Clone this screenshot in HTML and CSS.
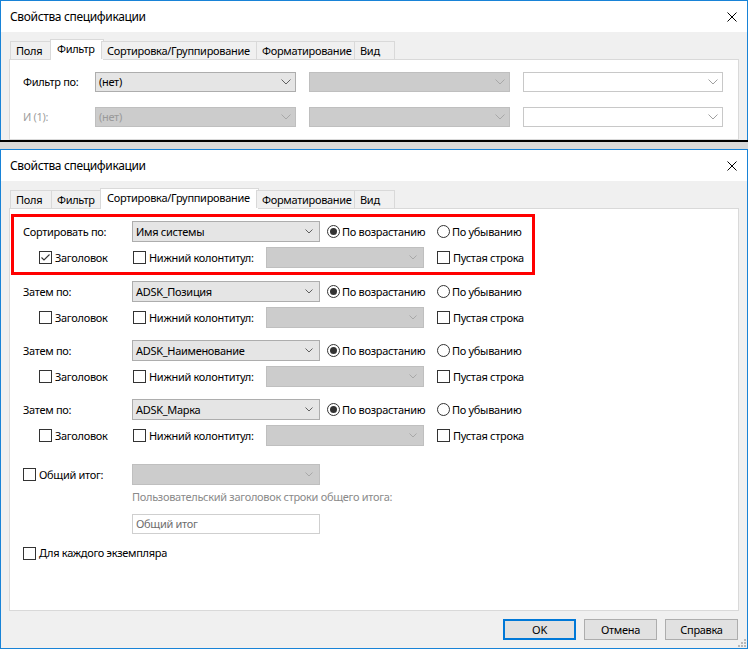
FILE: index.html
```html
<!DOCTYPE html>
<html lang="ru">
<head>
<meta charset="utf-8">
<title>Свойства спецификации</title>
<link rel="stylesheet" href="styles.css">
</head>
<body>
<div class="dlg dlg-top">
  <div class="titlebar">
    <span class="title">Свойства спецификации</span>
    <svg class="close" width="10" height="10" viewBox="0 0 10 10"><path d="M0.5 0.5 L9.5 9.5 M9.5 0.5 L0.5 9.5" stroke="#000" stroke-width="1"/></svg>
  </div>
  <div class="dbody">
    <div class="tabs">
      <div class="tab w1">Поля</div>
      <div class="tab w2 active">Фильтр</div>
      <div class="tab w3">Сортировка/Группирование</div>
      <div class="tab w4">Форматирование</div>
      <div class="tab w5">Вид</div>
    </div>
    <div class="panel panel-filter">
      <div class="frow">
        <span class="flabel">Фильтр по:</span>
        <div class="combo big"><span>(нет)</span><svg class="chev" width="10" height="6" viewBox="0 0 10 6"><path d="M0.5 0.5 L5 5 L9.5 0.5" fill="none" stroke="currentColor"/></svg></div>
        <div class="combo big dis"><span></span><svg class="chev" width="10" height="6" viewBox="0 0 10 6"><path d="M0.5 0.5 L5 5 L9.5 0.5" fill="none" stroke="currentColor"/></svg></div>
        <div class="combo big wht last"><span></span><svg class="chev" width="10" height="6" viewBox="0 0 10 6"><path d="M0.5 0.5 L5 5 L9.5 0.5" fill="none" stroke="currentColor"/></svg></div>
      </div>
      <div class="frow second">
        <span class="flabel gray">И (1):</span>
        <div class="combo big dis"><span>(нет)</span><svg class="chev" width="10" height="6" viewBox="0 0 10 6"><path d="M0.5 0.5 L5 5 L9.5 0.5" fill="none" stroke="currentColor"/></svg></div>
        <div class="combo big dis"><span></span><svg class="chev" width="10" height="6" viewBox="0 0 10 6"><path d="M0.5 0.5 L5 5 L9.5 0.5" fill="none" stroke="currentColor"/></svg></div>
        <div class="combo big wht last"><span></span><svg class="chev" width="10" height="6" viewBox="0 0 10 6"><path d="M0.5 0.5 L5 5 L9.5 0.5" fill="none" stroke="currentColor"/></svg></div>
      </div>
    </div>
  </div>
</div>

<div class="sep"></div>

<div class="dlg dlg-main">
  <div class="titlebar">
    <span class="title">Свойства спецификации</span>
    <svg class="close" width="10" height="10" viewBox="0 0 10 10"><path d="M0.5 0.5 L9.5 9.5 M9.5 0.5 L0.5 9.5" stroke="#000" stroke-width="1"/></svg>
  </div>
  <div class="dbody">
    <div class="tabs">
      <div class="tab w1">Поля</div>
      <div class="tab w2">Фильтр</div>
      <div class="tab w3 active">Сортировка/Группирование</div>
      <div class="tab w4">Форматирование</div>
      <div class="tab w5">Вид</div>
    </div>
    <div class="panel panel-sort">

      <div class="group highlight">
        <div class="row1">
          <span class="lbl1">Сортировать по:</span>
          <div class="combo c188"><span>Имя системы</span><svg class="chev" width="8" height="5" viewBox="0 0 8 5"><path d="M0.5 0.5 L4 4 L7.5 0.5" fill="none" stroke="currentColor"/></svg></div>
          <label class="radio-item"><svg class="radio" width="13" height="13" viewBox="0 0 13 13"><circle cx="6.5" cy="6.5" r="6" fill="#fff" stroke="#333"/><circle cx="6.5" cy="6.5" r="3.5" fill="#333"/></svg>По возрастанию</label>
          <label class="radio-item"><svg class="radio" width="13" height="13" viewBox="0 0 13 13"><circle cx="6.5" cy="6.5" r="6" fill="#fff" stroke="#333"/></svg>По убыванию</label>
        </div>
        <div class="row2">
          <label class="cb-item w94"><span class="cb"><svg width="11" height="11" viewBox="0 0 11 11"><path d="M1.5 5.5 L4 8 L9.5 2.5" fill="none" stroke="#333" stroke-width="1.1"/></svg></span>Заголовок</label>
          <label class="cb-item w133"><span class="cb"></span>Нижний колонтитул:</label>
          <div class="combo c158 dis"><span></span><svg class="chev" width="8" height="5" viewBox="0 0 8 5"><path d="M0.5 0.5 L4 4 L7.5 0.5" fill="none" stroke="currentColor"/></svg></div>
          <label class="cb-item"><span class="cb"></span>Пустая строка</label>
        </div>
      </div>

      <div class="group">
        <div class="row1">
          <span class="lbl1">Затем по:</span>
          <div class="combo c188"><span>ADSK_Позиция</span><svg class="chev" width="8" height="5" viewBox="0 0 8 5"><path d="M0.5 0.5 L4 4 L7.5 0.5" fill="none" stroke="currentColor"/></svg></div>
          <label class="radio-item"><svg class="radio" width="13" height="13" viewBox="0 0 13 13"><circle cx="6.5" cy="6.5" r="6" fill="#fff" stroke="#333"/><circle cx="6.5" cy="6.5" r="3.5" fill="#333"/></svg>По возрастанию</label>
          <label class="radio-item"><svg class="radio" width="13" height="13" viewBox="0 0 13 13"><circle cx="6.5" cy="6.5" r="6" fill="#fff" stroke="#333"/></svg>По убыванию</label>
        </div>
        <div class="row2">
          <label class="cb-item w94"><span class="cb"></span>Заголовок</label>
          <label class="cb-item w133"><span class="cb"></span>Нижний колонтитул:</label>
          <div class="combo c158 dis"><span></span><svg class="chev" width="8" height="5" viewBox="0 0 8 5"><path d="M0.5 0.5 L4 4 L7.5 0.5" fill="none" stroke="currentColor"/></svg></div>
          <label class="cb-item"><span class="cb"></span>Пустая строка</label>
        </div>
      </div>

      <div class="group">
        <div class="row1">
          <span class="lbl1">Затем по:</span>
          <div class="combo c188"><span>ADSK_Наименование</span><svg class="chev" width="8" height="5" viewBox="0 0 8 5"><path d="M0.5 0.5 L4 4 L7.5 0.5" fill="none" stroke="currentColor"/></svg></div>
          <label class="radio-item"><svg class="radio" width="13" height="13" viewBox="0 0 13 13"><circle cx="6.5" cy="6.5" r="6" fill="#fff" stroke="#333"/><circle cx="6.5" cy="6.5" r="3.5" fill="#333"/></svg>По возрастанию</label>
          <label class="radio-item"><svg class="radio" width="13" height="13" viewBox="0 0 13 13"><circle cx="6.5" cy="6.5" r="6" fill="#fff" stroke="#333"/></svg>По убыванию</label>
        </div>
        <div class="row2">
          <label class="cb-item w94"><span class="cb"></span>Заголовок</label>
          <label class="cb-item w133"><span class="cb"></span>Нижний колонтитул:</label>
          <div class="combo c158 dis"><span></span><svg class="chev" width="8" height="5" viewBox="0 0 8 5"><path d="M0.5 0.5 L4 4 L7.5 0.5" fill="none" stroke="currentColor"/></svg></div>
          <label class="cb-item"><span class="cb"></span>Пустая строка</label>
        </div>
      </div>

      <div class="group">
        <div class="row1">
          <span class="lbl1">Затем по:</span>
          <div class="combo c188"><span>ADSK_Марка</span><svg class="chev" width="8" height="5" viewBox="0 0 8 5"><path d="M0.5 0.5 L4 4 L7.5 0.5" fill="none" stroke="currentColor"/></svg></div>
          <label class="radio-item"><svg class="radio" width="13" height="13" viewBox="0 0 13 13"><circle cx="6.5" cy="6.5" r="6" fill="#fff" stroke="#333"/><circle cx="6.5" cy="6.5" r="3.5" fill="#333"/></svg>По возрастанию</label>
          <label class="radio-item"><svg class="radio" width="13" height="13" viewBox="0 0 13 13"><circle cx="6.5" cy="6.5" r="6" fill="#fff" stroke="#333"/></svg>По убыванию</label>
        </div>
        <div class="row2">
          <label class="cb-item w94"><span class="cb"></span>Заголовок</label>
          <label class="cb-item w133"><span class="cb"></span>Нижний колонтитул:</label>
          <div class="combo c158 dis"><span></span><svg class="chev" width="8" height="5" viewBox="0 0 8 5"><path d="M0.5 0.5 L4 4 L7.5 0.5" fill="none" stroke="currentColor"/></svg></div>
          <label class="cb-item"><span class="cb"></span>Пустая строка</label>
        </div>
      </div>

      <div class="total-row">
        <label class="cb-item w109"><span class="cb"></span>Общий итог:</label>
        <div class="combo c188 dis"><span></span><svg class="chev" width="8" height="5" viewBox="0 0 8 5"><path d="M0.5 0.5 L4 4 L7.5 0.5" fill="none" stroke="currentColor"/></svg></div>
      </div>
      <div class="caption">Пользовательский заголовок строки общего итога:</div>
      <div class="textbox">Общий итог</div>
      <label class="cb-item each"><span class="cb"></span>Для каждого экземпляра</label>
    </div>
    <div class="buttons">
      <div class="btn default">OK</div>
      <div class="btn">Отмена</div>
      <div class="btn">Справка</div>
    </div>
  </div>
  <svg class="grip" width="10" height="10" viewBox="0 0 10 10">
    <rect x="8" y="2" width="2" height="2" fill="#b8b8b8"/>
    <rect x="5" y="5" width="2" height="2" fill="#b8b8b8"/>
    <rect x="8" y="5" width="2" height="2" fill="#b8b8b8"/>
    <rect x="2" y="8" width="2" height="2" fill="#b8b8b8"/>
    <rect x="5" y="8" width="2" height="2" fill="#b8b8b8"/>
    <rect x="8" y="8" width="2" height="2" fill="#b8b8b8"/>
  </svg>
</div>
</body>
</html>
```

FILE: styles.css
```css
* { box-sizing: border-box; }
html, body { margin: 0; padding: 0; }
body {
  width: 748px;
  height: 649px;
  overflow: hidden;
  background: #f0f0f0;
  font-family: "Noto Sans", "Open Sans", sans-serif;
  font-size: 11px;
  letter-spacing: -0.3px;
  line-height: 16px;
  color: #000;
  display: flex;
  flex-direction: column;
}

.dlg {
  flex: none;
  border: 1px solid #1883d7;
  background: #f0f0f0;
  display: flex;
  flex-direction: column;
  position: relative;
}
.dlg-top {
  height: 140px;
  border-bottom: none;
  overflow: hidden;
}
.sep {
  flex: none;
  height: 9px;
  border-top: 2px solid #000;
  background: #d9d9d9;
}
.dlg-main { height: 500px; }

.titlebar {
  flex: none;
  height: 31px;
  background: #fff;
  display: flex;
  align-items: center;
  justify-content: space-between;
  padding: 0 10px 0 9px;
}
.title { font-size: 12px; letter-spacing: -0.35px; }
.close { display: block; }

.dbody {
  flex: 1;
  display: flex;
  flex-direction: column;
  padding: 9px 8px 0 8px;
}

.tabs {
  flex: none;
  height: 18px;
  display: flex;
  align-items: flex-end;
  padding-left: 1px;
  position: relative;
  z-index: 2;
}
.tab {
  height: 18px;
  border: 1px solid #d9d9d9;
  border-bottom: none;
  background: #f0f0f0;
  padding-left: 5px;
  white-space: nowrap;
  display: flex;
  align-items: center;
  margin-left: -1px;
}
.tab.w1 { width: 42px; margin-left: 0; }
.tab.w2 { width: 51px; }
.tab.w3 { width: 156px; }
.tab.w4 { width: 99px; }
.tab.w5 { width: 41px; }
.tab.active {
  height: 21px;
  margin-bottom: -1px;
  background: #fff;
  margin-left: -2px;
  margin-right: -2px;
  padding-left: 6px;
  padding-bottom: 2px;
}
.tab.w2.active { width: 54px; }
.tab.w3.active { width: 159px; }

.panel {
  background: #fff;
  border: 1px solid #d9d9d9;
}
.panel-filter {
  flex: 1;
  padding: 12px 0 0 13px;
}
.panel-sort {
  flex: none;
  height: 403px;
  padding: 12px 0 0 13px;
}

/* filter rows */
.frow {
  display: flex;
  align-items: center;
  height: 20px;
}
.frow.second { margin-top: 15px; }
.flabel { width: 72px; }
.gray { color: #a0a0a0; }

/* combos */
.combo {
  flex: none;
  display: flex;
  align-items: center;
  justify-content: space-between;
  height: 21px;
  border: 1px solid #adadad;
  background: #e5e5e5;
  padding: 0 6px 0 3px;
  white-space: nowrap;
  color: #000;
}
.combo .chev { display: block; color: #606060; }
.combo.big { width: 201px; height: 20px; margin-right: 13px; padding-right: 4px; }
.combo.big.last { width: 200px; margin-right: 0; }
.combo.dis { background: #cccccc; border-color: #bfbfbf; color: #9a9a9a; }
.combo.dis .chev { color: #a8a8a8; }
.combo.wht { background: #fff; border-color: #c8c8c8; }
.combo.wht .chev { color: #a0a0a0; }
.combo.c188 { width: 188px; }
.combo.c158 { width: 158px; margin-right: 13px; }

/* sort groups */
.group {
  width: 510px;
  margin-left: -5px;
  padding-left: 5px;
  margin-top: 12px;
}
.group.highlight {
  margin-top: 0;
  outline: 3px solid #ff0000;
  outline-offset: 4px;
}
.group:nth-child(2) { margin-top: 13px; }
.row1, .row2 {
  display: flex;
  align-items: center;
  height: 21px;
}
.row2 { margin-top: 5px; padding-left: 16px; }
.lbl1 { width: 109px; flex: none; }

.radio-item {
  display: flex;
  align-items: center;
  width: 110px;
  flex: none;
  white-space: nowrap;
}
.radio-item:first-of-type { margin-left: 7px; }
.radio { display: block; margin-right: 2px; flex: none; }

.cb-item {
  display: flex;
  align-items: center;
  flex: none;
  white-space: nowrap;
}
.cb-item.w94 { width: 94px; }
.cb-item.w133 { width: 133px; }
.cb-item.w109 { width: 109px; }
.cb {
  flex: none;
  width: 13px;
  height: 13px;
  border: 1px solid #333;
  background: #fff;
  margin-right: 3px;
  display: flex;
  align-items: center;
  justify-content: center;
}
.cb svg { display: block; }

.total-row {
  display: flex;
  align-items: center;
  height: 21px;
  margin-top: 18px;
}
.caption {
  margin-left: 109px;
  margin-top: 4px;
  color: #8a8a8a;
  white-space: nowrap;
}
.textbox {
  margin-left: 109px;
  margin-top: 9px;
  width: 188px;
  height: 20px;
  border: 1px solid #cfcfcf;
  background: #fff;
  color: #6d6d6d;
  padding-left: 3px;
  display: flex;
  align-items: center;
}
.cb-item.each { margin-top: 11px; }

/* buttons */
.buttons {
  flex: none;
  display: flex;
  justify-content: flex-end;
  gap: 8px;
  margin-top: 8px;
  padding-right: 1px;
}
.btn {
  width: 73px;
  height: 21px;
  border: 1px solid #adadad;
  background: #e1e1e1;
  display: flex;
  align-items: center;
  justify-content: center;
}
.btn.default { border: 2px solid #0078d7; }

.grip {
  position: absolute;
  right: 1px;
  bottom: 1px;
}
```
